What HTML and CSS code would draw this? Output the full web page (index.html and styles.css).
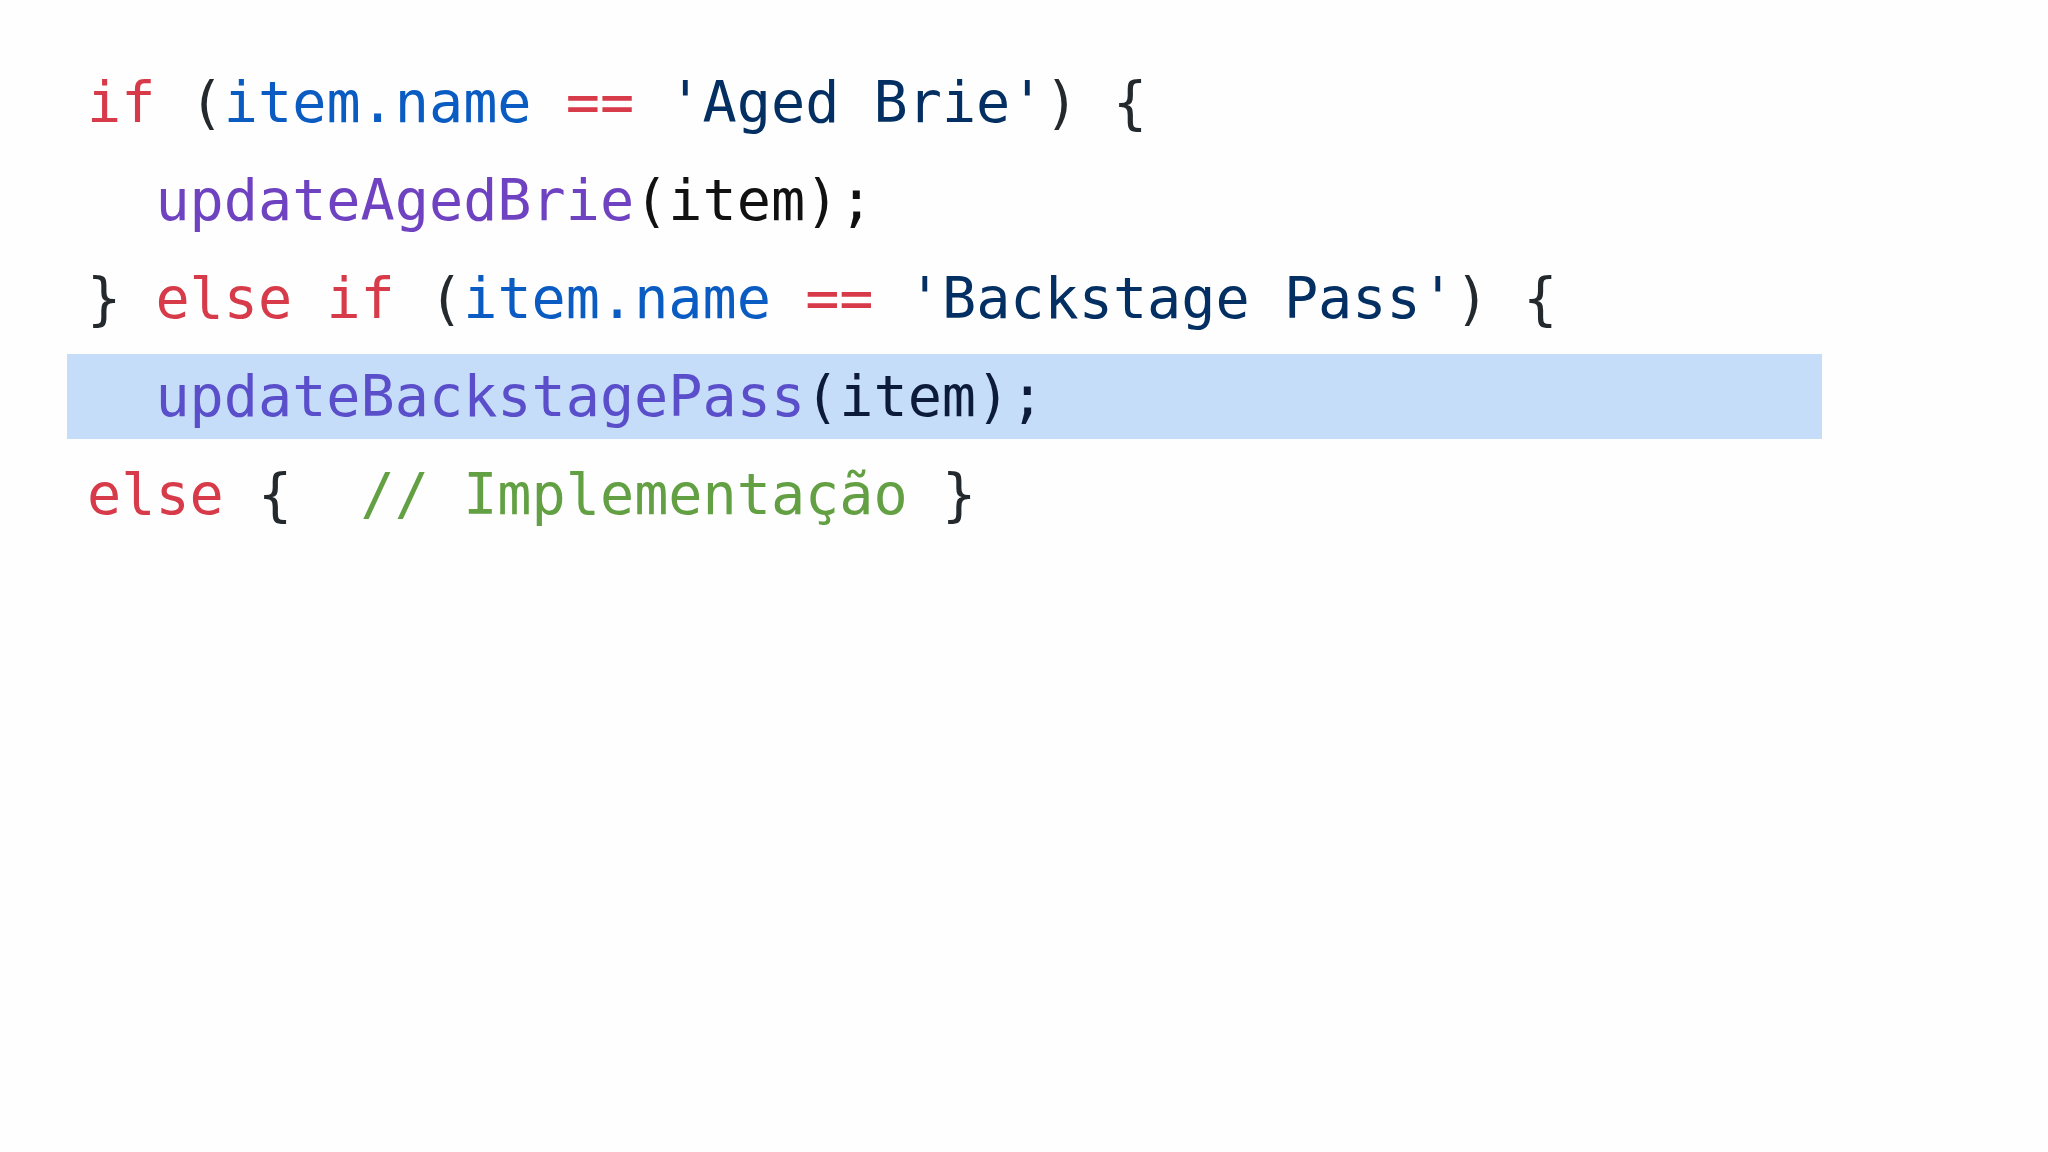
FILE: index.html
```html
<!DOCTYPE html>
<html lang="pt">
<head>
<meta charset="utf-8">
<title>Código</title>
<link rel="stylesheet" href="styles.css">
</head>
<body>
<main class="slide">
  <pre class="code"><div class="line"><span class="kw">if</span> <span class="pn">(</span><span class="var">item.name</span> <span class="kw">==</span> <span class="str">'Aged Brie'</span><span class="pn">)</span> <span class="pn">{</span></div><div class="line">  <span class="fn">updateAgedBrie</span><span class="arg">(item);</span></div><div class="line"><span class="pn">}</span> <span class="kw">else</span> <span class="kw">if</span> <span class="pn">(</span><span class="var">item.name</span> <span class="kw">==</span> <span class="str">'Backstage Pass'</span><span class="pn">)</span> <span class="pn">{</span></div><div class="line line-hl">  <span class="fn-hl">updateBackstagePass</span><span class="arg-hl">(item);</span></div><div class="line"><span class="kw">else</span> <span class="pn">{</span>  <span class="cm">// Implementação</span> <span class="pn">}</span></div></pre>
</main>
</body>
</html>
```
FILE: styles.css
```css
html, body {
  margin: 0;
  padding: 0;
  background: #fefefe;
}
.slide {
  width: 2048px;
  height: 1152px;
  padding-top: 60px;
  box-sizing: border-box;
}
.code {
  margin: 0 0 0 67px;
  width: 1755px;
  display: flex;
  flex-direction: column;
  gap: 13px;
  font-family: "DejaVu Sans Mono", "Liberation Mono", monospace;
  font-size: 56.8px;
  line-height: 85px;
  color: #24292e;
}
.line {
  height: 85px;
  padding-left: 20px;
  white-space: pre;
}
.line-hl {
  background: #c5ddf8;
}
.kw { color: #d73a49; }
.pn { color: #24292e; }
.var { color: #0b5cc2; }
.str { color: #032f62; }
.fn { color: #6f42c1; }
.arg { color: #111111; }
.fn-hl { color: #5a4ecb; }
.arg-hl { color: #0d1b3a; }
.cm { color: #62a043; }
```
